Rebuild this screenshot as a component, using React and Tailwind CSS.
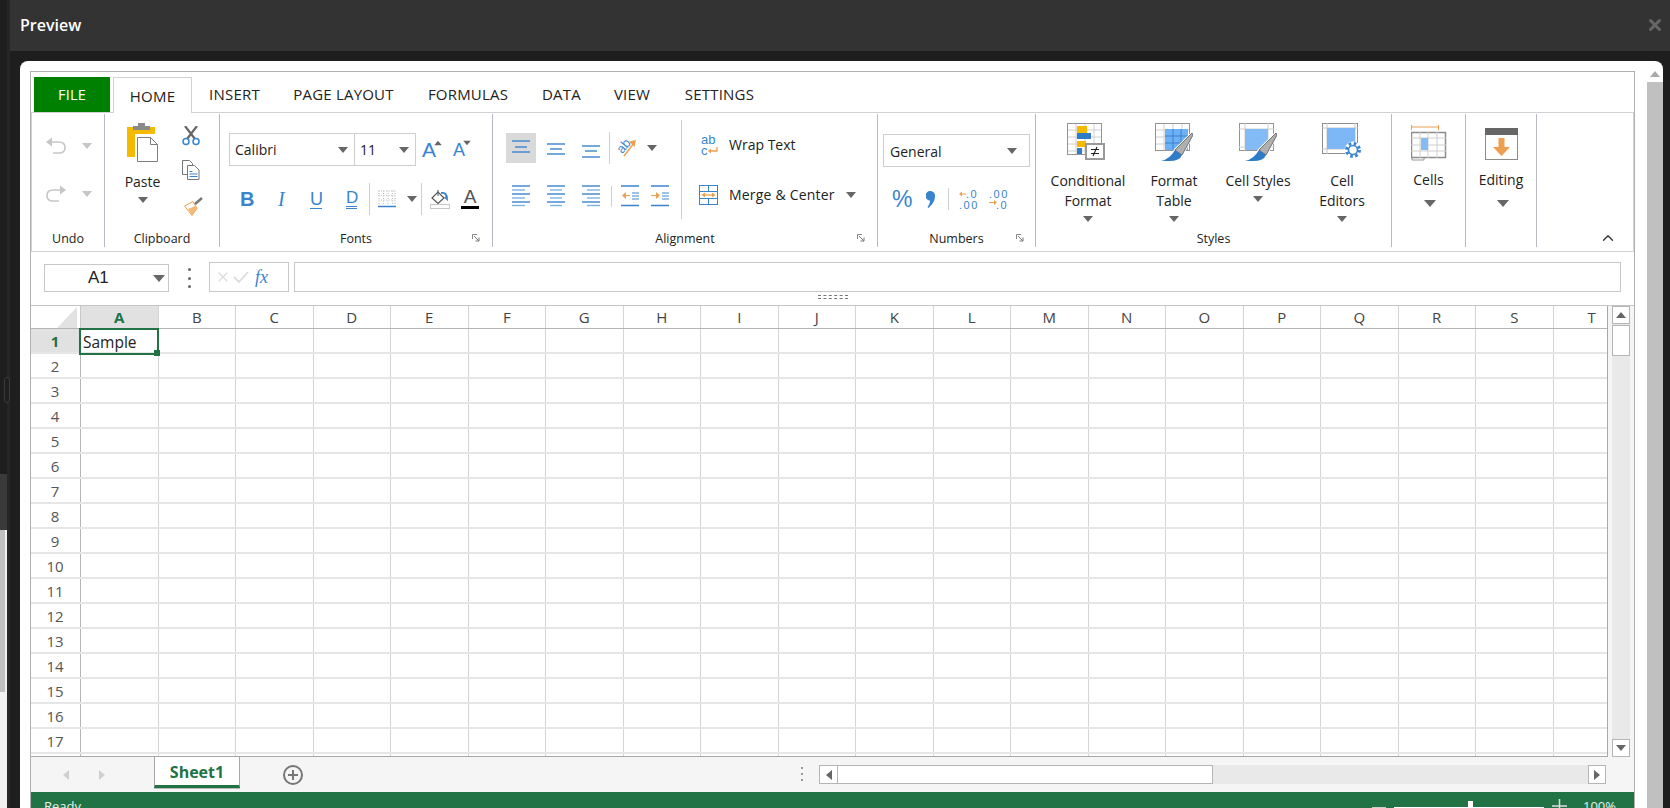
import { ChevronUp, X } from "lucide-react";

const COLS = "ABCDEFGHIJKLMNOPQRST".split("");
const ROWS = Array.from({ length: 18 }, (_, i) => i + 1);
const TABS = [
  { t: "INSERT", w: "w-[85px]" },
  { t: "PAGE LAYOUT", w: "w-[133px]" },
  { t: "FORMULAS", w: "w-[116px]" },
  { t: "DATA", w: "w-[71px]" },
  { t: "VIEW", w: "w-[70px]" },
  { t: "SETTINGS", w: "w-[105px]" },
];
const BLUE = "#3a84cf";
const ORANGE = "#ee9f4e";

function Caret({ className = "" }) {
  return <span className={`block h-0 w-0 shrink-0 border-x-[5px] border-t-[6px] border-x-transparent border-t-[#666] ${className}`} />;
}

function BigCaret({ className = "" }) {
  return <span className={`block h-0 w-0 shrink-0 border-x-[6px] border-t-[7px] border-x-transparent border-t-[#666] ${className}`} />;
}

function Sep({ className = "" }) {
  return <span className={`block w-px shrink-0 bg-[#cfcfcf] ${className}`} />;
}

function Launcher({ className = "" }) {
  return (
    <svg width="8" height="8" viewBox="0 0 8 8" className={className}>
      <path d="M.5 5V.5H5" fill="none" stroke="#888" />
      <path d="M2 2l5 5M7 3.5V7H3.5" fill="none" stroke="#777" />
    </svg>
  );
}

function Group({ label, launcher, className = "", launcherClass = "mr-[12px]", children }) {
  return (
    <div className={`flex h-[133px] shrink-0 flex-col border-r border-[#b8bbc3] ${className}`}>
      <div className="h-[117px]">{children}</div>
      <div className="grid h-[16px] grid-cols-[1fr_auto_1fr] items-center text-[12.500px] leading-[16px] text-[#222]">
        <span />
        <span>{label}</span>
        {launcher ? <Launcher className={`justify-self-end -translate-y-[1px] ${launcherClass}`} /> : <span />}
      </div>
    </div>
  );
}

function Undo({ flip }) {
  return (
    <svg width="20" height="18" viewBox="0 0 20 18" className={flip ? "-scale-x-100" : ""}>
      <path d="M0 5l6-4.5v9z" fill="#c6c6c6" />
      <path d="M5 5h8q6 0 6 5.500t-6 5.500H7" fill="none" stroke="#c6c6c6" strokeWidth="1.600" />
    </svg>
  );
}

function PasteIcon() {
  return (
    <svg width="32" height="40" viewBox="0 0 32 40">
      <rect x="0" y="5" width="28" height="30" fill="#f5ba00" />
      <rect x="8" y="12" width="24" height="28" fill="#fff" />
      <path d="M6 4h5V1h7v3h5v4H6z" fill="#8a8a8a" />
      <path d="M10.500 15.500h13l7 7v17h-20z" fill="#fff" stroke="#7d7d7d" />
      <path d="M23.500 15.500v7h7" fill="none" stroke="#7d7d7d" />
    </svg>
  );
}

function Scissors() {
  return (
    <svg width="18" height="20" viewBox="0 0 18 20">
      <path d="M3 0l10 13M15 0L5 13" stroke="#666" strokeWidth="2.200" />
      <circle cx="4" cy="15.500" r="3" fill="none" stroke={BLUE} strokeWidth="1.500" />
      <circle cx="14" cy="15.500" r="3" fill="none" stroke={BLUE} strokeWidth="1.500" />
    </svg>
  );
}

function CopyIcon() {
  return (
    <svg width="18" height="20" viewBox="0 0 18 20">
      <path d="M.5.500h7l3 3v11h-10z" fill="#fff" stroke="#777" />
      <path d="M5.500 5.500h7l4.500 4.500v9.500H5.500z" fill="#fff" stroke="#777" />
      <path d="M7.500 11.500h3M7.500 14h8M7.500 16.500h8" stroke={BLUE} />
    </svg>
  );
}

function PainterIcon() {
  return (
    <svg width="20" height="20" viewBox="0 0 20 20">
      <path d="M.5 10L9 5.500l4 7L8 19.500z" fill="#fff" stroke={ORANGE} />
      <path d="M4 13l7-3 2 2.500-5 7z" fill="#f5b878" />
      <path d="M11 8l7-6" stroke="#777" strokeWidth="2.500" />
    </svg>
  );
}

function BordersIcon() {
  return (
    <svg width="18" height="18" viewBox="0 0 18 18">
      <path d="M.5 1h17M.5 5.500h17M.5 10h17M1 .5v15M5.500.500v15M10 .5v15M14.500.500v15M17 .5v15" stroke="#bdbdbd" strokeDasharray="1 1.500" fill="none" />
      <path d="M0 16.500h18" stroke={BLUE} strokeWidth="1.500" />
    </svg>
  );
}

function FillIcon() {
  return (
    <svg width="20" height="20" viewBox="0 0 20 20">
      <path d="M2 9l6-6 6 6-6 5.500z" fill="#fff" stroke="#555" strokeWidth="1.200" />
      <path d="M8 1v6" stroke="#555" />
      <path d="M11 4q6-1 6 6l-2-2" fill="none" stroke={BLUE} strokeWidth="1.800" />
      <rect x="0.500" y="15.500" width="19" height="4" fill="#fff" stroke="#c8c8c8" />
    </svg>
  );
}

function Lines({ rows, light = [] }) {
  return (
    <svg width="18" height="22" viewBox="0 0 18 22" className="shrink-0">
      {rows.map(([a, b, y], i) => (
        <path key={i} d={`M${a} ${y}H${b}`} stroke={light.includes(i) ? "#7fb0e2" : BLUE} strokeWidth="1.400" />
      ))}
    </svg>
  );
}

function IndentIcon({ flip }) {
  return (
    <svg width="18" height="22" viewBox="0 0 18 22" className="shrink-0">
      <path d="M0 1h18M0 20.500h18" stroke={BLUE} strokeWidth="1.500" />
      <path d="M11 8h7M11 11h7M11 14h7" stroke="#7fb0e2" strokeWidth="1.300" />
      {flip ? <path d="M0 10h5V7l4 3.500L5 14v-3H0z" fill={ORANGE} /> : <path d="M9 10H5V7l-4 3.500L5 14v-3h4z" fill={ORANGE} />}
    </svg>
  );
}

function OrientIcon() {
  return (
    <svg width="28" height="28" viewBox="-4 -4 28 28" className="-m-[4px] shrink-0">
      <text x="0" y="13" transform="rotate(-50 6 9)" fontSize="13" fontFamily="Liberation Sans, sans-serif" fill={BLUE}>ab</text>
      <path d="M7 18L17 5" stroke={ORANGE} strokeWidth="1.500" />
      <path d="M12 3.500l7-1.500-1.500 7z" fill={ORANGE} />
    </svg>
  );
}

function WrapIcon() {
  return (
    <svg width="20" height="28" viewBox="0 -4 20 28" className="-my-[4px] -mr-[3px] shrink-0">
      <text x="0" y="9" fontSize="13" fontFamily="Liberation Sans, sans-serif" fill={BLUE}>ab</text>
      <text x="0" y="20" fontSize="13" fontFamily="Liberation Sans, sans-serif" fill={BLUE}>c</text>
      <path d="M16 12v4H9" fill="none" stroke={ORANGE} strokeWidth="1.300" />
      <path d="M10 13.500V18.500L7 16z" fill={ORANGE} />
    </svg>
  );
}

function MergeIcon() {
  return (
    <svg width="19" height="20" viewBox="0 0 19 20" className="shrink-0">
      <rect x="0.500" y="0.500" width="18" height="19" fill="#fff" stroke={BLUE} />
      <path d="M0 6.500h19M0 13.500h19M9.500 0v6.500M9.500 13.500V20" stroke={BLUE} />
      <path d="M4 10h11" stroke={ORANGE} strokeWidth="1.300" />
      <path d="M6 7.500v5L2.500 10zM13 7.500v5l3.500-2.500z" fill={ORANGE} />
    </svg>
  );
}

function CommaIcon() {
  return (
    <svg width="9" height="17" viewBox="0 0 9 17" className="shrink-0">
      <path d="M4.500 0a4.500 4.500 0 0 1 4.500 5c0 5-3 9-6.500 12L1.500 16c1.500-2 2.500-4 2.500-6.500A4.700 4.700 0 0 1 4.500 0z" fill={BLUE} />
    </svg>
  );
}

function DecIcon({ more }) {
  const font = { fontSize: 11, fontFamily: "Liberation Sans, sans-serif", fill: BLUE, letterSpacing: 1.500 };
  return (
    <svg width="20" height="24" viewBox="0 -2 20 24" className="-my-[2px] -mr-[2px] shrink-0">
      <text x={more ? 0 : 7} y="8.500" {...font}>{more ? ".00" : ".0"}</text>
      <text x={more ? 7 : 0} y="19.500" {...font}>{more ? ".0" : ".00"}</text>
      {more ? <path d="M0 13.500h6" stroke={ORANGE} /> : <path d="M2 5h5" stroke={ORANGE} />}
      {more ? <path d="M5 11l3 2.500L5 16z" fill={ORANGE} /> : <path d="M3 2.500L0 5l3 2.500z" fill={ORANGE} />}
    </svg>
  );
}

function Brush() {
  return (
    <>
      <path d="M37 10l1 2-11 20-7-5z" fill="#b0b0b0" stroke="#fff" strokeWidth="2.500" />
      <path d="M37 10l1 2-11 20-7-5z" fill="#b0b0b0" stroke="#707070" />
      <path d="M20 27l7 5q-2 6-13 6H6q9-2 14-11z" fill="#2f7cc6" />
    </>
  );
}

function GridLines({ w, h }) {
  const d = [];
  for (let x = 9; x < w; x += 9) d.push(`M${x} 0V${h}`);
  for (let y = 7; y < h; y += 7) d.push(`M0 ${y}H${w}`);
  return (
    <>
      <path d={d.join("")} stroke="#cfcfcf" />
      <rect x="0.500" y="0.500" width={w - 1} height={h - 1} fill="none" stroke="#949494" />
    </>
  );
}

function ConditionalIcon() {
  return (
    <svg width="38" height="38" viewBox="0 0 38 38" className="mr-[4px]">
      <GridLines w={35} h={32} />
      <rect x="10" y="3" width="10" height="7" fill="#f5ba00" />
      <rect x="10" y="10" width="14" height="6" fill="#2f7cc6" />
      <rect x="10" y="18" width="9" height="6" fill="#f5ba00" />
      <rect x="10" y="25" width="5" height="6" fill="#2f7cc6" />
      <rect x="19" y="21" width="18" height="15" fill="#fff" stroke="#999" strokeWidth="2" />
      <path d="M24 26.500h8M24 30.500h8M30 24l-4 9" stroke="#222" strokeWidth="1.100" fill="none" />
    </svg>
  );
}

function TableIcon() {
  return (
    <svg width="38" height="38" viewBox="0 0 38 38">
      <GridLines w={35} h={28} />
      <rect x="10" y="6" width="23" height="21" fill="#6cb0f5" />
      <path d="M10 13h23M10 20h23M18 6v21M26 6v21" stroke="#3a84cf" />
      <Brush />
    </svg>
  );
}

function StylesIcon() {
  return (
    <svg width="38" height="38" viewBox="0 0 38 38">
      <rect x="0.500" y="0.500" width="34" height="27" fill="#fff" stroke="#949494" />
      <path d="M6 0v28M0 6h35M29 0v28M0 24h35" stroke="#cfcfcf" />
      <rect x="6" y="6" width="23" height="21" fill="#82bbf5" />
      <Brush />
    </svg>
  );
}

function EditorsIcon() {
  return (
    <svg width="40" height="37" viewBox="0 0 40 37">
      <rect x="0.500" y="0.500" width="35" height="30" fill="#fff" stroke="#8c8c8c" />
      <path d="M5 0v31M33 0v31M0 5h36M0 26h36" stroke="#c8c8c8" />
      <rect x="5" y="5" width="28" height="21" fill="#7db7f5" />
      <circle cx="31" cy="27" r="8.500" fill="#fff" />
      <circle cx="31" cy="27" r="6.500" fill="none" stroke={BLUE} strokeWidth="3" strokeDasharray="2.600 2.500" />
      <circle cx="31" cy="27" r="4.500" fill="#fff" stroke={BLUE} strokeWidth="1.600" />
    </svg>
  );
}

function CellsIcon() {
  return (
    <svg width="36" height="36" viewBox="0 0 36 36">
      <path d="M1 2h26" stroke={ORANGE} />
      <path d="M.5 0v5M27.500 0v5" stroke={ORANGE} />
      <path d="M1 32v3h12v-3" fill="#fff" stroke="#999" />
      <rect x="0.500" y="7.500" width="34" height="25" fill="#fff" stroke="#8c8c8c" strokeWidth="1.500" />
      <path d="M9 7v26M17 7v26M26 7v26M0 13h35M0 20h35M0 26h35" stroke="#cfcfcf" />
      <rect x="10" y="13" width="7" height="12" fill="#82bbf5" />
    </svg>
  );
}

function EditingIcon() {
  return (
    <svg width="33" height="32" viewBox="0 0 33 32">
      <rect x="0.500" y="0.500" width="32" height="31" fill="#fff" stroke="#8c8c8c" />
      <rect x="0" y="0" width="33" height="7" fill="#666" />
      <path d="M13.500 10h6v9H25l-8.500 9L8 19h5.500z" fill={ORANGE} />
    </svg>
  );
}

function StyleItem({ icon, lines, className }) {
  return (
    <div className={`flex flex-col items-center pt-[9px] ${className}`}>
      <div className="h-[38px]">{icon}</div>
      <div className="mt-[10px] text-center text-[14px] leading-[20px] text-[#222]">
        {lines.map((l) => (
          <div key={l}>{l}</div>
        ))}
      </div>
      <Caret className="mt-[5px]" />
    </div>
  );
}

function Ribbon() {
  return (
    <div className="flex h-[139px] border-x border-b border-[#d2d2d2] pt-px">
      <Group label="Undo" className="w-[73px]">
        <div className="flex h-[18px] items-center pl-[14px] mt-[23px]">
          <Undo />
          <Caret className="ml-[16px] border-t-[#c6c6c6]" />
        </div>
        <div className="flex h-[18px] items-center pl-[14px] mt-[30px]">
          <Undo flip />
          <Caret className="ml-[16px] border-t-[#c6c6c6]" />
        </div>
      </Group>

      <Group label="Clipboard" className="w-[115px]">
        <div className="flex">
          <div className="flex w-[75px] flex-col items-center pt-[8px]">
            <PasteIcon />
            <span className="mt-[11px] text-[14px] leading-[18px] text-[#222]">Paste</span>
            <Caret className="mt-[6px]" />
          </div>
          <div className="flex flex-col pl-[2px] pt-[12px]">
            <Scissors />
            <div className="mt-[14px]"><CopyIcon /></div>
            <div className="ml-[2px] mt-[16px]"><PainterIcon /></div>
          </div>
        </div>
      </Group>

      <Group label="Fonts" launcher className="w-[273px]">
        <div className="flex items-center pl-[9px] pt-[19px]">
          <div className="flex h-[33px] w-[126px] items-center justify-between border border-[#cfcfcf] pl-[5px] pr-[6px] text-[14px] text-[#222]">
            Calibri
            <Caret />
          </div>
          <div className="flex h-[33px] w-[61px] items-center justify-between border border-l-0 border-[#cfcfcf] pl-[5px] pr-[6px] text-[14px] text-[#222]">
            11
            <Caret />
          </div>
          <div className="ml-[6px] flex w-[17px] items-start">
            <span className="font-['Liberation_Sans',sans-serif] text-[21px] leading-[22px] text-[#3a84cf]">A</span>
            <Caret className="-ml-[3px] mt-[1px] rotate-180 scale-75" />
          </div>
          <div className="ml-[14px] flex w-[17px] items-start">
            <span className="font-['Liberation_Sans',sans-serif] text-[18px] leading-[22px] text-[#3a84cf]">A</span>
            <Caret className="-ml-[3px] mt-[1px] scale-75" />
          </div>
        </div>
        <div className="mt-[17px] flex h-[32px] items-center pl-[20px] font-['Liberation_Sans',sans-serif] text-[#3a84cf]">
          <span className="w-[12px] text-[20px] font-bold leading-none">B</span>
          <span className="ml-[26px] w-[8px] font-['Liberation_Serif',serif] text-[20px] italic leading-none">I</span>
          <span className="ml-[24px] w-[12px] border-b-[1.500px] border-[#3a84cf] text-center text-[18px] leading-[18px]">U</span>
          <span className="ml-[24px] w-[11px] border-b-[3px] border-double border-[#3a84cf] text-center text-[17px] leading-[17px]">D</span>
          <Sep className="ml-[12px] h-[32px]" />
          <div className="ml-[8px]"><BordersIcon /></div>
          <Caret className="ml-[11px]" />
          <Sep className="ml-[4px] h-[32px]" />
          <div className="ml-[8px]"><FillIcon /></div>
          <div className="ml-[11px] flex w-[18px] flex-col items-center">
            <span className="font-['Liberation_Sans',sans-serif] text-[19px] leading-[16px] text-[#555]">A</span>
            <span className="mt-[1px] block h-[3px] w-[18px] bg-black" />
          </div>
        </div>
      </Group>

      <Group label="Alignment" launcher className="w-[385px]">
        <div className="flex pt-[6px]">
          <div className="h-[99px] w-[189px] border-r border-[#cfcfcf]">
            <div className="mt-[12px] flex h-[32px] items-center pl-[13px]">
              <div className="flex h-[30px] w-[30px] items-center justify-center bg-[#d9d9d9]">
                <Lines rows={[[0, 18, 4], [3, 15, 10], [0, 18, 15]]} />
              </div>
              <div className="ml-[11px]"><Lines rows={[[0, 18, 7], [3, 15, 12], [0, 18, 17]]} /></div>
              <div className="ml-[17px]"><Lines rows={[[0, 18, 9], [3, 15, 14], [0, 18, 20]]} /></div>
              <Sep className="ml-[9px] h-[32px]" />
              <div className="ml-[7px]"><OrientIcon /></div>
              <Caret className="ml-[10px]" />
            </div>
            <div className="mt-[21px] flex h-[22px] items-center pl-[19px]">
              <Lines rows={[[0, 18, 1], [0, 13, 5], [0, 18, 9], [0, 13, 13], [0, 18, 17], [0, 13, 20.500]]} light={[1, 3, 5]} />
              <div className="ml-[17px]"><Lines rows={[[0, 18, 1], [3, 15, 5], [0, 18, 9], [3, 15, 13], [0, 18, 17], [3, 15, 20.500]]} light={[1, 3, 5]} /></div>
              <div className="ml-[17px]"><Lines rows={[[0, 18, 1], [5, 18, 5], [0, 18, 9], [5, 18, 13], [0, 18, 17], [5, 18, 20.500]]} light={[1, 3, 5]} /></div>
              <Sep className="ml-[11px] h-[21px] w-[2px]" />
              <div className="ml-[9px]"><IndentIcon /></div>
              <div className="ml-[12px]"><IndentIcon flip /></div>
            </div>
          </div>
          <div className="text-[14px] leading-[20px] text-[#222]">
            <div className="mt-[15px] flex h-[20px] items-center pl-[19px]">
              <WrapIcon />
              <span className="ml-[11px]">Wrap Text</span>
            </div>
            <div className="mt-[30px] flex h-[20px] items-center pl-[17px]">
              <MergeIcon />
              <span className="ml-[11px] tracking-[0.200px]">Merge &amp; Center</span>
              <Caret className="ml-[11px]" />
            </div>
          </div>
        </div>
      </Group>

      <Group label="Numbers" launcher launcherClass="mr-[11px]" className="w-[158px]">
        <div className="ml-[5px] mt-[20px] flex h-[33px] w-[147px] items-center justify-between border border-[#cfcfcf] px-[6px] pr-[12px] pt-px text-[14px] text-[#222]">
          General
          <Caret />
        </div>
        <div className="mt-[21px] flex h-[22px] items-center pl-[14px] font-['Liberation_Sans',sans-serif] text-[#3a84cf]">
          <span className="w-[18px] text-[23px] leading-none">%</span>
          <div className="ml-[16px]"><CommaIcon /></div>
          <Sep className="ml-[13px] h-[22px] w-[2px]" />
          <div className="ml-[10px]"><DecIcon /></div>
          <div className="ml-[12px]"><DecIcon more /></div>
        </div>
      </Group>

      <Group label="Styles" className="w-[356px]">
        <div className="flex">
          <StyleItem className="w-[104px]" icon={<ConditionalIcon />} lines={["Conditional", "Format"]} />
          <StyleItem className="w-[68px]" icon={<TableIcon />} lines={["Format", "Table"]} />
          <StyleItem className="w-[100px]" icon={<StylesIcon />} lines={["Cell Styles"]} />
          <StyleItem className="w-[68px]" icon={<EditorsIcon />} lines={["Cell", "Editors"]} />
        </div>
      </Group>

      <Group label="" className="w-[74px]">
        <div className="flex flex-col items-center pt-[11px] text-[14px] leading-[20px] text-[#222]">
          <div className="h-[34px]"><CellsIcon /></div>
          <span className="mt-[11px]">Cells</span>
          <BigCaret className="ml-[2px] mt-[10px]" />
        </div>
      </Group>

      <Group label="" className="w-[71px]">
        <div className="flex flex-col items-center pt-[14px] text-[14px] leading-[20px] text-[#222]">
          <div className="h-[32px]"><EditingIcon /></div>
          <span className="mt-[10px]">Editing</span>
          <BigCaret className="ml-[3px] mt-[10px]" />
        </div>
      </Group>

      <div className="flex h-[133px] flex-1 items-end justify-end pr-[16px]">
        <ChevronUp size={18} strokeWidth={1.800} className="text-[#333]" />
      </div>
    </div>
  );
}

function FormulaBar() {
  return (
    <div className="flex h-[54px] flex-col border-b border-[#c4c4c4]">
      <div className="mt-[10px] flex pl-[13px] pr-[13px]">
        <div className="mt-[2px] flex h-[28px] w-[125px] items-center justify-between border border-[#c8c8c8] pl-[43px] pr-[3px] font-['Liberation_Sans',sans-serif] text-[17px] text-[#222]">
          A1
          <BigCaret />
        </div>
        <div className="ml-[19px] mt-[6px] flex h-[20px] w-[3px] flex-col justify-between">
          <span className="h-[3px] w-[3px] rounded-full bg-[#666]" />
          <span className="h-[3px] w-[3px] rounded-full bg-[#666]" />
          <span className="h-[3px] w-[3px] rounded-full bg-[#666]" />
        </div>
        <div className="ml-[18px] flex h-[30px] w-[80px] items-center border border-[#c8c8c8] pl-[5px]">
          <X size={16} strokeWidth={1.800} className="text-[#dcdcdc]" />
          <svg width="16" height="14" viewBox="0 0 16 14" className="ml-[2px]">
            <path d="M1 7l5 5L15 2" fill="none" stroke="#dcdcdc" strokeWidth="1.800" />
          </svg>
          <span className="ml-[6px] font-['Liberation_Serif',serif] text-[18px] italic leading-none text-[#3a84cf]">fx</span>
        </div>
        <div className="ml-[5px] h-[30px] flex-1 border border-[#c8c8c8]" />
      </div>
      <span className="mt-[3px] h-[4px] w-[30px] self-center border-y border-dashed border-[#777]" />
    </div>
  );
}

function Sheet() {
  return (
    <div className="relative flex h-[451px] w-[1577px] flex-col overflow-hidden border-r border-b border-[#a8a8a8]">
      <div className="flex h-[23px] shrink-0 border-b border-[#b5b5b5]">
        <div className="flex w-[50px] shrink-0 justify-end border-r border-[#c8c8c8] pr-[3px] pt-[1px]">
          <svg width="20" height="21" viewBox="0 0 20 21">
            <path d="M20 0v21H0z" fill="#e2e2e2" />
          </svg>
        </div>
        {COLS.map((c, i) => (
          <div
            key={c}
            className={`flex h-full w-[77.500px] shrink-0 items-center justify-center border-r border-[#d4d4d4] text-[15px] ${i === 0 ? "bg-[#e1e1e1] font-bold text-[#217346]" : "text-[#444]"}`}
          >
            {c}
          </div>
        ))}
      </div>
      {ROWS.map((r) => (
        <div key={r} className="flex h-[25px] shrink-0 border-b-2 border-[#e6e6e6]">
          <div className={`flex w-[50px] shrink-0 items-center justify-center border-r border-[#b5b5b5] pr-px pt-px text-[15px] ${r === 1 ? "bg-[#e1e1e1] font-bold text-[#217346]" : "text-[#555]"}`}>
            {r < 18 ? r : ""}
          </div>
          {COLS.map((c) => (
            <div key={c} className="h-full w-[77.500px] shrink-0 border-r border-[#d4d4d4] pl-[2px] pt-[1px] text-[15.500px] leading-[24px] text-[#222]">
              {r === 1 && c === "A" ? "Sample" : ""}
            </div>
          ))}
        </div>
      ))}
      {/* selection box sits over the cells */}
      <div className="absolute left-[48px] top-[22px] h-[27px] w-[80px] border-2 border-[#217346]">
        <span className="absolute -bottom-[3px] -right-[3px] h-[6px] w-[6px] bg-[#217346]" />
      </div>
    </div>
  );
}

function SideScroll() {
  return (
    <div className="flex flex-1 flex-col bg-[#f5f5f5] pl-[4px] pr-[4px]">
      <div className="flex h-[451px] flex-col bg-[#e9e9e9]">
        <div className="flex h-[18px] items-center justify-center border border-[#b5b5b5] bg-white">
          <Caret className="rotate-180" />
        </div>
        <div className="mt-[1px] h-[31px] border border-[#b5b5b5] bg-white" />
        <div className="mt-auto flex h-[18px] items-center justify-center border border-[#b5b5b5] bg-white">
          <Caret />
        </div>
      </div>
    </div>
  );
}

function BottomBar() {
  return (
    <div className="flex h-[35px] bg-[#f5f5f5]">
      <div className="flex h-[36px] items-center pl-[32px]">
        <span className="block h-0 w-0 border-y-[5px] border-r-[6px] border-y-transparent border-r-[#d0d0d0]" />
        <span className="ml-[30px] block h-0 w-0 border-y-[5px] border-l-[6px] border-y-transparent border-l-[#d0d0d0]" />
      </div>
      <div className="-mt-px ml-[49px] flex h-[32px] w-[86px] items-center justify-center border-x border-[#a8a8a8] border-b-[3px] border-b-[#217346] bg-white pt-[2px] text-[16px] font-bold text-[#217346] shadow-[0_1px_0_#bbb]">
        Sheet1
      </div>
      <div className="ml-[41px] mt-[8px] flex h-[20px] w-[20px] translate-x-[2px] items-center justify-center rounded-full border-2 border-[#777] text-[#777]">
        <svg width="10" height="10" viewBox="0 0 10 10">
          <path d="M5 0v10M0 5h10" stroke="#777" strokeWidth="2" />
        </svg>
      </div>
      <div className="ml-[500px] mt-[10px] flex h-[14px] flex-col justify-between">
        <span className="h-[2px] w-[2px] bg-[#999]" />
        <span className="h-[2px] w-[2px] bg-[#999]" />
        <span className="h-[2px] w-[2px] bg-[#999]" />
      </div>
      <div className="ml-[16px] mt-[8px] flex h-[19px] w-[787px] bg-[#e9e9e9]">
        <div className="flex w-[19px] items-center justify-center border border-[#b5b5b5] bg-white">
          <span className="block h-0 w-0 border-y-[5px] border-r-[6px] border-y-transparent border-r-[#666]" />
        </div>
        <div className="w-[375px] border border-l-0 border-[#b5b5b5] bg-white" />
        <div className="ml-auto flex w-[18px] items-center justify-center border border-[#b5b5b5] bg-white">
          <span className="block h-0 w-0 border-y-[5px] border-l-[6px] border-y-transparent border-l-[#666]" />
        </div>
      </div>
    </div>
  );
}

function StatusBar() {
  return (
    <div className="flex h-[30px] bg-[#217346] text-[13px] text-[#e8f1ec]">
      <span className="ml-[13px] pt-[5px] leading-[18px]">Ready</span>
      <div className="ml-auto flex">
        <span className="mt-[15px] h-[2px] w-[14px] bg-[#ccc]" />
        <div className="relative ml-[8px] mt-[15px] h-[2px] w-[150px] bg-white">
          <span className="absolute -top-[6px] left-[74px] h-[8px] w-[5px] bg-white" />
        </div>
        <svg width="15" height="15" viewBox="0 0 15 15" className="ml-[8px] mt-[7px]">
          <path d="M7.500 0v15M0 7h15" stroke="#ddd" strokeWidth="1.500" />
        </svg>
        <span className="ml-[16px] mr-[18px] pt-[5px] leading-[18px]">100%</span>
      </div>
    </div>
  );
}

export default function App() {
  return (
    <div className="flex h-[808px] w-[1670px] overflow-hidden bg-[#1e1e1e] font-['Open_Sans',sans-serif]">
      <div className="relative flex w-[7px] shrink-0 flex-col bg-[#1e1e1e]">
        <div className="mt-[474px] h-[56px] bg-[#3a3a3a]" />
        <div className="flex-1 bg-[#f0f0f0]">
          <div className="h-[162px] w-[5px] bg-[#c0c0c0]" />
        </div>
        {/* panel resize handle */}
        <span className="absolute left-[4px] top-[377px] h-[26px] w-[6px] rounded-[3px] border border-[#3a3a3a] bg-[#1e1e1e]" />
      </div>
      <div className="w-[3px] shrink-0 bg-[#262626]" />
      <div className="flex min-w-0 flex-1 flex-col">
        <header className="flex h-[51px] shrink-0 items-center justify-between bg-[#333] pb-px pl-[10px] pr-[6px]">
          <h1 className="text-[16px] font-semibold text-white">Preview</h1>
          <X size={18} strokeWidth={4} className="text-[#666]" />
        </header>
        <div className="flex flex-1 pl-[10px] pr-[7px] pt-[10px]">
          <div className="flex min-w-0 flex-1 rounded-t-[8px] bg-white pl-[10px] pt-[10px]">
            <div className="h-[760px] w-[1605px] shrink-0 border-x border-t border-[#b0b0b0]">
              <div className="flex h-[41px] border-b border-[#d2d2d2] pl-[3px] pt-[5px] text-[15px] tracking-[0.200px] text-[#222]">
                <div className="flex h-[35px] w-[76px] items-center justify-center bg-[#008000] text-[14.500px] text-white">FILE</div>
                <div className="ml-[3px] flex h-[36px] w-[79px] items-center justify-center border-x border-t border-[#d2d2d2] bg-white pt-[1px]">HOME</div>
                {TABS.map((tab) => (
                  <div key={tab.t} className={`flex h-[35px] items-center justify-center ${tab.w}`}>
                    {tab.t}
                  </div>
                ))}
              </div>
              <Ribbon />
              <FormulaBar />
              <div className="flex">
                <Sheet />
                <SideScroll />
              </div>
              <BottomBar />
              <StatusBar />
            </div>
            <div className="ml-[12px] flex w-[16px] shrink-0 flex-col">
              <div className="flex h-[11px] items-start justify-center">
                <Caret className="rotate-180 border-t-[#aaa]" />
              </div>
              <div className="flex-1 bg-[#bfc0bf]" />
            </div>
          </div>
        </div>
      </div>
    </div>
  );
}
